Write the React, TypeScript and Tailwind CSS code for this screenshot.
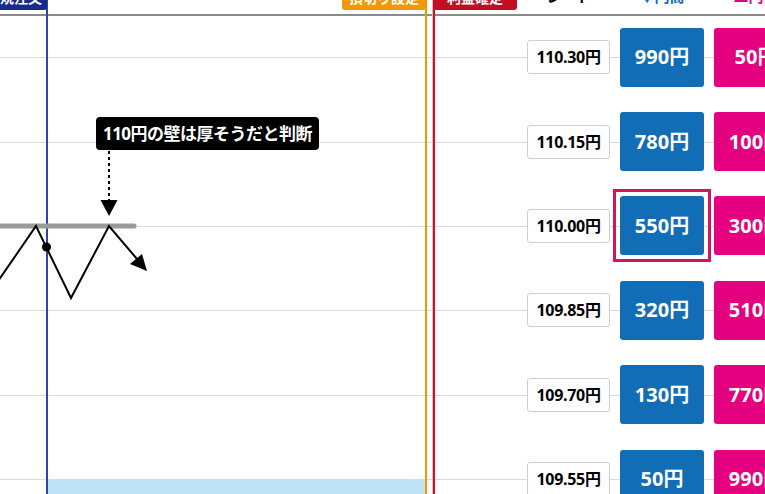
import React from "react";

const rows = [
  { rate: "110.30円", buy: "990円", sell: "50円" },
  { rate: "110.15円", buy: "780円", sell: "100円" },
  { rate: "110.00円", buy: "550円", sell: "300円", hl: true },
  { rate: "109.85円", buy: "320円", sell: "510円" },
  { rate: "109.70円", buy: "130円", sell: "770円" },
  { rate: "109.55円", buy: "50円", sell: "990円" },
];

export default function App() {
  return (
    <div
      className="relative w-[765px] h-[494px] overflow-hidden bg-white"
      style={{ fontFamily: '"Noto Sans", "Noto Sans CJK JP", sans-serif' }}
    >
      {/* header */}
      <div className="h-[16px] border-b-2 border-[#8a8a8a] flex items-start pl-[527px] gap-[10px] overflow-hidden">
        <div className="w-[83px] shrink-0 -mt-[11px] text-center text-[15px] font-bold leading-none text-black">
          レート
        </div>
        <div className="w-[84px] shrink-0 -mt-[11px] text-center text-[15px] font-bold leading-none text-[#106db6]">
          ▼円高
        </div>
        <div className="w-[84px] shrink-0 -mt-[11px] text-center text-[15px] font-bold leading-none text-[#e4007f]">
          ▲円安
        </div>
      </div>

      {/* rows */}
      <div className="-mt-[1px] flex flex-col">
        {rows.map((r) => (
          <div key={r.rate} className="relative h-[84.4px] shrink-0 flex items-center pl-[527px] gap-[10px]">
            <div className="absolute inset-x-0 top-1/2 h-px bg-[#d9d9d9]" />
            <div className="relative z-10 w-[83px] h-[34px] shrink-0 flex items-center justify-center rounded-[3px] border border-[#cfcfcf] bg-white text-[16px] font-bold text-black tracking-[-0.3px]">
              {r.rate}
            </div>
            <div className="relative z-10 w-[84px] h-[59px] shrink-0 flex items-center justify-center rounded-[3px] bg-[#106db6] text-[20px] font-bold text-white">
              {r.buy}
              {r.hl && (
                <div className="absolute -inset-[7px] border-[3px] border-[#d6135c]" />
              )}
            </div>
            <div className="relative z-10 w-[84px] h-[59px] shrink-0 flex items-center justify-center rounded-[3px] bg-[#e4007f] text-[20px] font-bold text-white">
              {r.sell}
            </div>
          </div>
        ))}
      </div>

      {/* light blue zone */}
      <div className="absolute left-[47px] top-[479px] w-[378px] h-[20px] bg-[#bde3f5]" />

      {/* vertical lines */}
      <div className="absolute left-[46px] top-0 w-[2px] h-[494px] bg-[#2c44b0]" />
      <div className="absolute left-[425px] top-0 w-[2px] h-[494px] bg-[#f39800]" />
      <div className="absolute left-[432px] top-0 w-[3px] h-[494px] bg-[#f0b3bd]" />
      <div className="absolute left-[433px] top-0 w-[1.5px] h-[494px] bg-[#d0112b]" />

      {/* top labels */}
      <div className="absolute left-0 top-0 w-[47px] h-[10px] rounded-br-[3px] bg-[#1a2a8a] overflow-hidden">
        <div className="text-[14px] font-bold leading-none text-white whitespace-nowrap -mt-[9px] -ml-[14px]">
          新規注文
        </div>
      </div>
      <div className="absolute left-[342px] top-0 w-[84px] h-[10px] rounded-b-[3px] bg-[#f39800] overflow-hidden">
        <div className="text-center text-[14px] font-bold leading-none text-white whitespace-nowrap -mt-[9px]">
          損切り設定
        </div>
      </div>
      <div className="absolute left-[433px] top-0 w-[84px] h-[10px] rounded-b-[3px] bg-[#c30d23] overflow-hidden">
        <div className="text-center text-[14px] font-bold leading-none text-white whitespace-nowrap -mt-[9px]">
          利益確定
        </div>
      </div>

      {/* chart drawing */}
      <svg className="absolute left-0 top-0" width="430" height="494" viewBox="0 0 430 494">
        <line x1="-4" y1="226" x2="134" y2="226" stroke="#9a9a9a" strokeWidth="5" strokeLinecap="round" />
        <polyline
          points="-6,287 36,226 71,298 109,226 137,259"
          fill="none"
          stroke="#000"
          strokeWidth="2"
          strokeLinejoin="miter"
        />
        <polygon points="130,264 147,271 142,254" fill="#000" />
        <circle cx="46.5" cy="247" r="4.5" fill="#000" />
        <line x1="109" y1="151" x2="109" y2="201" stroke="#000" strokeWidth="2" strokeDasharray="3 3" />
        <polygon points="100.5,200 117.5,200 109,216" fill="#000" />
      </svg>

      {/* tooltip */}
      <div className="absolute left-[96px] top-[117px] w-[223px] h-[33px] rounded-[4px] bg-black flex items-center justify-center text-[17px] font-bold text-white whitespace-nowrap tracking-[-0.5px]">
        110円の壁は厚そうだと判断
      </div>
    </div>
  );
}
